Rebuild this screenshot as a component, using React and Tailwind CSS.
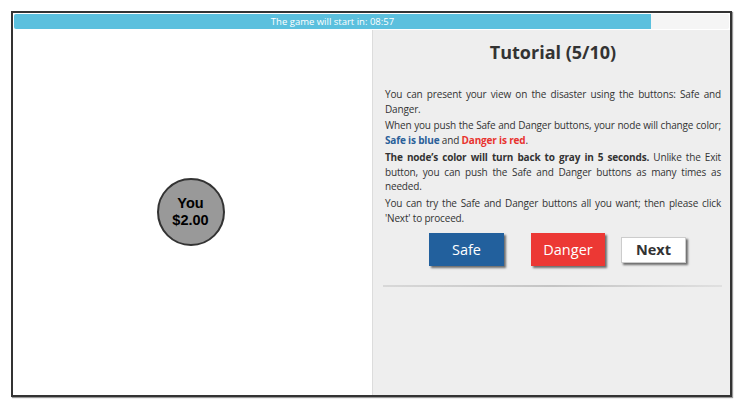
export default function App() {
  const p = "font-['Open_Sans',sans-serif] text-[10px] tracking-[-0.17px] leading-[14.7px] text-[#333] text-justify mb-[2px]";
  return (
    <div className="w-[741px] h-[414px] bg-white relative">
      <div className="absolute left-[11px] top-[11px] w-[721px] h-[386px] border-2 border-[#333] shadow-[1px_1px_1px_rgba(0,0,0,0.4)] flex flex-col bg-white">
        <div className="h-[17px] px-px pt-px flex-none">
          <div className="h-[15px] bg-[#f5f5f5] rounded-[2px] flex overflow-hidden">
            <div className="w-[637px] h-full bg-[#5bc0de] flex items-center justify-center text-white font-['Open_Sans',sans-serif] text-[9.5px] leading-none">
              The game will start in: 08:57
            </div>
          </div>
        </div>
        <div className="flex flex-1 min-h-0">
          <div className="w-[359px] flex-none flex items-center justify-center bg-white">
            <div className="w-[68px] h-[68px] rounded-full bg-[#999] border-2 border-[#333] flex flex-col items-center justify-center font-['Liberation_Sans',Arial,sans-serif] font-bold text-[14.5px] leading-[17px] text-black mt-[-2px] ml-[-4px]">
              <span>You</span>
              <span>$2.00</span>
            </div>
          </div>
          <div className="flex-1 bg-[#eeeeee] border-l border-[#dcdcdc] pl-[12px] pr-[9px] pt-[10px]">
            <h1 className="font-['Open_Sans',sans-serif] font-bold text-[18px] leading-[24px] text-[#333] text-center mb-[23px]">
              Tutorial (5/10)
            </h1>
            <p className={p}>You can present your view on the disaster using the buttons: Safe and Danger.</p>
            <p className={p}>
              When you push the Safe and Danger buttons, your node will change color;{" "}
              <b className="text-[#2a6099]">Safe is blue</b> and <b className="text-[#e8332f]">Danger is red</b>.
            </p>
            <p className={p}>
              <b>The node’s color will turn back to gray in 5 seconds.</b> Unlike the Exit button, you can push the Safe and Danger buttons as many times as needed.
            </p>
            <p className={p}>
              You can try the Safe and Danger buttons all you want; then please click 'Next' to proceed.
            </p>
            <div className="flex items-center pl-[44px] mt-[8px]">
              <button className="w-[75px] h-[33px] bg-[#22609d] text-white font-['Open_Sans',sans-serif] text-[14.5px] shadow-[2px_2px_2px_rgba(0,0,0,0.55)]">Safe</button>
              <button className="w-[74px] h-[33px] ml-[27px] bg-[#ec3834] text-white font-['Open_Sans',sans-serif] text-[14.5px] shadow-[2px_2px_2px_rgba(0,0,0,0.55)]">Danger</button>
              <button className="w-[65px] h-[26px] ml-[16px] bg-white text-[#333] font-['Open_Sans',sans-serif] font-bold text-[14.5px] border border-[#ccc] shadow-[2px_2px_2px_rgba(0,0,0,0.55)]">Next</button>
            </div>
            <div className="mt-[19px] ml-[-2px] mr-[-1px] h-[2px] bg-gradient-to-r from-[#d8d8d8] via-[#c4c4c4] to-[#e0e0e0]"></div>
          </div>
        </div>
      </div>
    </div>
  );
}
